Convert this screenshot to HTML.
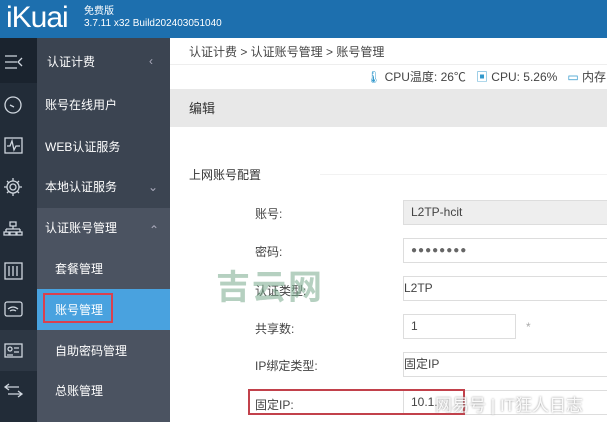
<!DOCTYPE html>
<html><head><meta charset="utf-8"><style>
*{margin:0;padding:0;box-sizing:border-box}
body{width:607px;height:422px;overflow:hidden;position:relative;background:#fff;font-family:"Liberation Sans","Noto Sans CJK SC",sans-serif;font-size:12px;color:#333}
.hdr{position:absolute;left:0;top:0;width:607px;height:38px;background:#1d6fae;color:#fff}
.logo{position:absolute;left:6px;top:0;font-size:30px;letter-spacing:-1px;line-height:36px}
.ver{position:absolute;left:84px;top:6px;font-size:10px;line-height:12px}
.icol{position:absolute;left:0;top:38px;width:37px;height:384px;background:#222c38}
.ncol{position:absolute;left:37px;top:38px;width:133px;height:384px;background:#3b4451}
.sub{position:absolute;left:37px;top:208px;width:133px;height:214px;background:#4b5361}
.nt{position:absolute;color:#fff;font-size:12px;line-height:16px}
.act{position:absolute;left:37px;top:289px;width:133px;height:41px;background:#49a2df}
.c{position:absolute}
.lbl{position:absolute;left:255px;font-size:12px;color:#444}
.inp{position:absolute;left:403px;width:210px;height:25px;border:1px solid #ddd;padding-left:7px;line-height:23px;font-size:12px;color:#444}
</style></head><body>
<div class="hdr"><div class="logo">iKuai</div><div class="ver">免费版<br>3.7.11 x32 Build202403051040</div></div>
<div class="icol"></div>
<div style="position:absolute;left:0;top:38px;width:37px;height:45px;background:#1a232e"></div>
<div style="position:absolute;left:0;top:330px;width:37px;height:41px;background:#2d3744"></div>
<div class="ncol"></div><div class="sub"></div><div class="act"></div>
<div style="position:absolute;left:43px;top:293px;width:70px;height:30px;border:2px solid #d9414e"></div>
<svg style="position:absolute;left:0;top:38px" width="37" height="384" fill="none" stroke="#cfd6de" stroke-width="1.3">
<path d="M5 18h12M5 24h12M5 30h12M22 20l-4 4 4 4"/>
<circle cx="13" cy="67" r="8"/><path d="M10 67l4 2"/>
<rect x="5" y="100" width="17" height="15"/><path d="M7 108h3l2-5 2 9 2-4h4"/>
<circle cx="13" cy="149" r="3"/><path d="M13 140v3M13 155v3M4 149h3M19 149h3M7 143l2 2M17 153l2 2M7 155l2-2M17 145l2-2"/><circle cx="13" cy="149" r="6"/>
<path d="M10 184h6v4h-6zM13 188v3M6 191h14M6 191v3M20 191v3M4 194h5v3h-5zM17 194h5v3h-5zM10 194h6v3h-6z"/>
<rect x="5" y="225" width="17" height="16"/><path d="M9 228v10M13 228v10M17 228v10"/>
<rect x="5" y="264" width="17" height="14" rx="2"/><path d="M8 271q5-4 10 0M10 273q3-2 6 0"/>
<rect x="5" y="306" width="17" height="13"/><circle cx="10" cy="311" r="2"/><path d="M14 310h5M14 314h5M7 317h6"/>
<path d="M5 349h14M9 346l-4 3 4 3M22 356H8M18 353l4 3-4 3"/>
</svg>
<div class="nt" style="left:47px;top:54px">认证计费</div><div class="nt" style="left:149px;top:53px;color:#aab">&lsaquo;</div>
<div class="nt" style="left:45px;top:97px">账号在线用户</div>
<div class="nt" style="left:45px;top:139px">WEB认证服务</div>
<div class="nt" style="left:45px;top:179px">本地认证服务</div><div class="nt" style="left:148px;top:179px;color:#aab">&#8964;</div>
<div class="nt" style="left:45px;top:220px">认证账号管理</div><div class="nt" style="left:149px;top:222px;color:#aab">&#8963;</div>
<div class="nt" style="left:55px;top:261px">套餐管理</div>
<div class="nt" style="left:55px;top:302px">账号管理</div>
<div class="nt" style="left:55px;top:343px">自助密码管理</div>
<div class="nt" style="left:55px;top:383px">总账管理</div>
<div class="c" style="left:189px;top:43px;font-size:12px;color:#444">认证计费 &gt; 认证账号管理 &gt; 账号管理</div>
<div class="c" style="left:170px;top:64px;width:437px;height:1px;background:#eee"></div>
<div class="c" style="left:366px;top:68px;font-size:12px;color:#444;white-space:nowrap"><span style="color:#39c">&#127777;</span> CPU温度: 26℃ &nbsp;&nbsp;<span style="color:#39c">&#9635;</span> CPU: 5.26% &nbsp;&nbsp;<span style="color:#39c">&#9645;</span> 内存</div>
<div class="c" style="left:170px;top:89px;width:437px;height:38px;background:#e8e8e8"></div>
<div class="c" style="left:189px;top:98px;font-size:13px">编辑</div>
<div class="c" style="left:189px;top:166px;font-size:12px">上网账号配置</div>
<div class="c" style="left:320px;top:174px;width:287px;height:1px;background:#f2f2f2"></div>
<div class="lbl" style="top:205px">账号:</div><div class="inp" style="top:200px;background:#eee">L2TP-hcit</div>
<div class="lbl" style="top:243px">密码:</div><div class="inp" style="top:238px;letter-spacing:1px;font-size:10px;color:#666">●●●●●●●●</div>
<div class="lbl" style="top:282px">认证类型:</div><div class="inp" style="top:276px;padding-left:0">L2TP</div>
<div class="lbl" style="top:320px">共享数:</div><div class="inp" style="top:314px;width:113px">1</div><div class="c" style="left:526px;top:320px;color:#aaa">*</div>
<div class="lbl" style="top:357px">IP绑定类型:</div><div class="inp" style="top:352px;padding-left:0">固定IP</div>
<div class="lbl" style="top:396px">固定IP:</div><div class="inp" style="top:390px">10.1.</div>
<div class="c" style="left:248px;top:389px;width:217px;height:26px;border:2px solid #c2414b"></div>
<div class="c" style="left:216px;top:260px;font-size:34px;font-weight:bold;color:rgba(120,170,140,.55);letter-spacing:2px">吉云网</div>
<div class="c" style="left:435px;top:391px;font-size:17px;color:rgba(255,255,255,.9);text-shadow:0 0 2px #888;white-space:nowrap">网易号 | IT狂人日志</div>
</body></html>
